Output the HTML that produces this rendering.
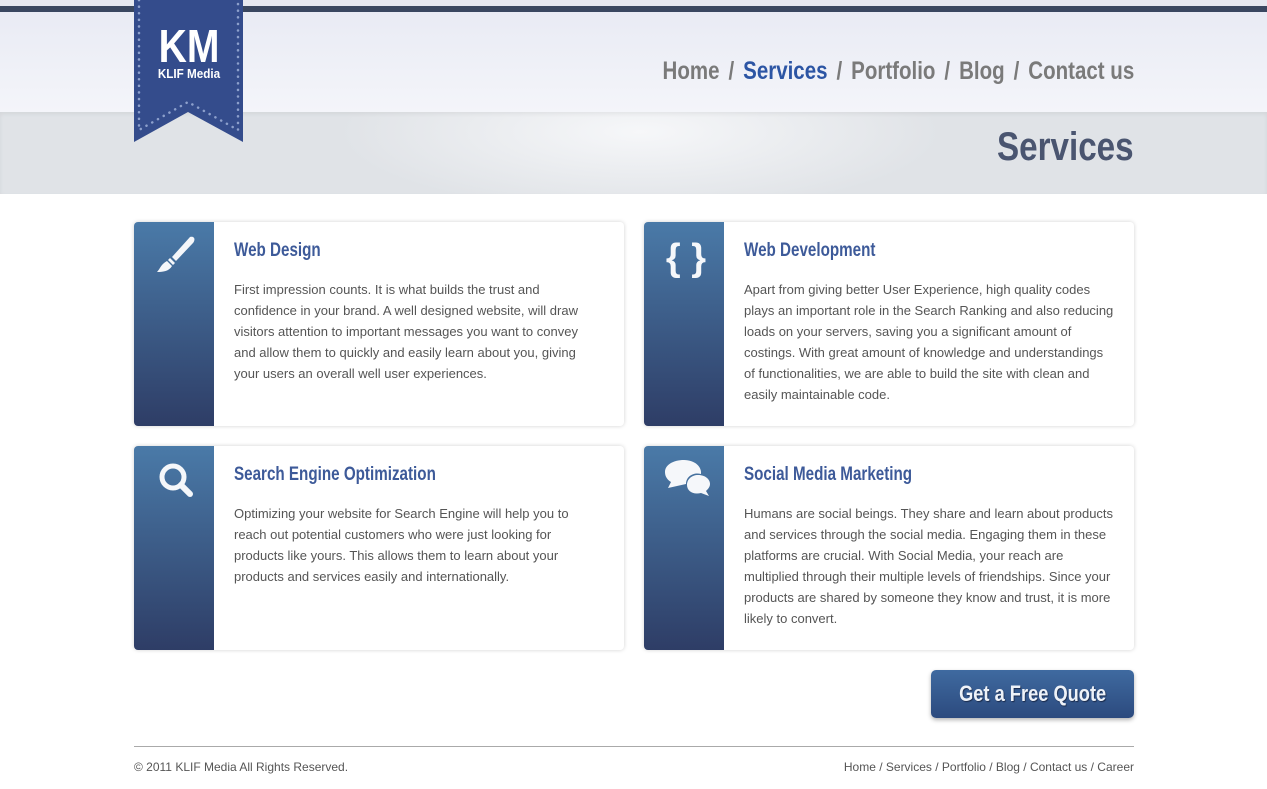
<!DOCTYPE html>
<html><head><style>
*{margin:0;padding:0;box-sizing:border-box}
body{width:1267px;height:789px;background:#fff;font-family:"Liberation Sans",sans-serif;position:relative;overflow:hidden}
.cond{font-family:"Liberation Sans",sans-serif;font-weight:bold;display:inline-block;white-space:nowrap}
#top{position:absolute;left:0;top:0;width:1267px;height:6px;background:#e6e8f0}
#bar{position:absolute;left:0;top:6px;width:1267px;height:6px;background:#3a4760}
#hdr{position:absolute;left:0;top:12px;width:1267px;height:100px;background:linear-gradient(#e9ebf4,#f4f5fa)}
#band{position:absolute;left:0;top:112px;width:1267px;height:82px;background:radial-gradient(ellipse 300px 80px at 640px 20px,#f6f7f9,#e0e3e7);box-shadow:inset 0 2px 4px rgba(0,0,0,.06)}
#nav{position:absolute;right:133px;top:57px;font-size:25px;color:#7a7a7a;transform:scaleX(.82);transform-origin:right center}
#nav span{margin:0 4px}
#nav .a{color:#2c55a4}
#title{position:absolute;right:133px;top:125px;font-size:40px;color:#4a5570;transform:scaleX(.83);transform-origin:right center}
.card{position:absolute;width:490px;height:204px;background:#fff;border-radius:4px;box-shadow:0 0 4px rgba(0,0,0,.18);overflow:hidden}
.side{position:absolute;left:0;top:0;width:80px;height:204px;background:linear-gradient(#4a7aa8,#2e3d66)}
.side svg{position:absolute;left:20px;top:12px}
.card h2{position:absolute;left:100px;top:18px;font-size:19px;color:#3d5a99;transform:scaleX(.8);transform-origin:left center}
.card p{position:absolute;left:100px;top:57px;width:362px;font-size:13px;line-height:21px;color:#555}
.card.r p{width:371px}
#btn{position:absolute;left:931px;top:670px;width:203px;height:48px;border-radius:5px;background:linear-gradient(#3f6aa0,#2c4a7e);box-shadow:0 2px 4px rgba(0,0,0,.3);color:#eef2f8;text-align:center;line-height:48px;text-shadow:1px 1px 1px #1a2a4a}
#btn span{font-size:22px;transform:scaleX(.83)}
#fl{position:absolute;left:134px;top:746px;width:1000px;height:1px;background:#aaa}
.ft{position:absolute;top:760px;font-size:12px;color:#555}
</style></head><body>
<div id="top"></div><div id="bar"></div><div id="hdr"></div><div id="band"></div>
<svg style="position:absolute;left:134px;top:0" width="109" height="143">
<polygon points="0,0 109,0 109,142 54,112 0,142" fill="#344c8c"/>
<polyline points="5,0 5,130 54,102 104,130 104,0" fill="none" stroke="#8da0cc" stroke-width="2.5" stroke-dasharray="0.1 6.5" stroke-linecap="round"/>
<text x="55" y="62" text-anchor="middle" fill="#fff" font-family="Liberation Sans,sans-serif" font-weight="bold" font-size="46" transform="translate(55 0) scale(.85 1) translate(-55 0)">KM</text>
<text x="55" y="78" text-anchor="middle" fill="#fff" font-family="Liberation Sans,sans-serif" font-weight="bold" font-size="13" transform="translate(55 0) scale(.9 1) translate(-55 0)">KLIF Media</text>
</svg>
<div id="nav" class="cond">Home <span>/</span> <span class="a" style="margin:0">Services</span> <span>/</span> Portfolio <span>/</span> Blog <span>/</span> Contact us</div>
<div id="title" class="cond">Services</div>

<div class="card" style="left:134px;top:222px"><div class="side"><svg width="44" height="44" viewBox="0 0 44 44"><path d="M36 3 C40 2 42 5 39 9 L22 27 L18 23 Z" fill="#f5f7fa"/><path d="M16 24 L21 29 L19 31 L14 26Z" fill="#f5f7fa"/><path d="M13 27 L18 32 C15 37 10 38 3 38 C6 35 7 30 13 27Z" fill="#f5f7fa"/></svg></div>
<h2 class="cond">Web Design</h2><p>First impression counts. It is what builds the trust and confidence in your brand. A well designed website, will draw visitors attention to important messages you want to convey and allow them to quickly and easily learn about you, giving your users an overall well user experiences.</p></div>

<div class="card r" style="left:644px;top:222px"><div class="side"><svg width="44" height="44" viewBox="0 0 44 44"><text x="22" y="36" text-anchor="middle" fill="#f5f7fa" font-family="Liberation Sans,sans-serif" font-weight="bold" font-size="38">{ }</text></svg></div>
<h2 class="cond">Web Development</h2><p>Apart from giving better User Experience, high quality codes plays an important role in the Search Ranking and also reducing loads on your servers, saving you a significant amount of costings. With great amount of knowledge and understandings of functionalities, we are able to build the site with clean and easily maintainable code.</p></div>

<div class="card" style="left:134px;top:446px"><div class="side"><svg width="44" height="44" viewBox="0 0 44 44"><circle cx="19" cy="19" r="11" fill="none" stroke="#f5f7fa" stroke-width="5"/><line x1="27" y1="27" x2="36" y2="36" stroke="#f5f7fa" stroke-width="6" stroke-linecap="round"/></svg></div>
<h2 class="cond">Search Engine Optimization</h2><p>Optimizing your website for Search Engine will help you to reach out potential customers who were just looking for products like yours. This allows them to learn about your products and services easily and internationally.</p></div>

<div class="card r" style="left:644px;top:446px"><div class="side"><svg width="48" height="48" viewBox="0 0 48 48"><path d="M20 2 C31 2 38 9 37 16 C30 14 22 18 22 26 L4 30 L7 24 C2 21 1 17 1 14 C1 7 9 2 20 2Z" fill="#f5f7fa"/><path d="M34 17 C42 17 46 22 46 26 C46 29 44 31 42 33 L45 38 L37 35 C29 37 23 33 23 27 C23 21 28 17 34 17Z" fill="#f5f7fa"/></svg></div>
<h2 class="cond">Social Media Marketing</h2><p>Humans are social beings. They share and learn about products and services through the social media. Engaging them in these platforms are crucial. With Social Media, your reach are multiplied through their multiple levels of friendships. Since your products are shared by someone they know and trust, it is more likely to convert.</p></div>

<div id="btn"><span class="cond">Get a Free Quote</span></div>
<div id="fl"></div>
<div class="ft" style="left:134px">© 2011 KLIF Media All Rights Reserved.</div>
<div class="ft" style="right:133px">Home / Services / Portfolio / Blog / Contact us / Career</div>
</body></html>
